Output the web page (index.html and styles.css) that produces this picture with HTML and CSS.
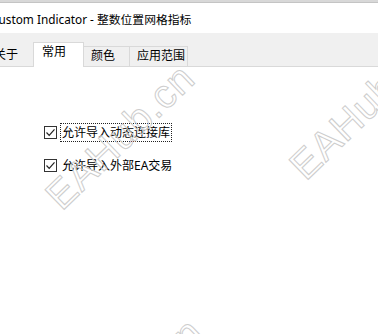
FILE: index.html
```html
<!DOCTYPE html>
<html lang="zh-CN">
<head>
  <meta charset="UTF-8">
  <title>Custom Indicator - 整数位置网格指标</title>
  <link rel="stylesheet" href="styles.css">
</head>
<body>
  <div class="window">
    <div class="topstrip"></div>
    <div class="titlebar">
      <span class="title">Custom Indicator - 整数位置网格指标</span>
    </div>

    <div class="tabbar">
      <div class="tab tab-first">关于</div>
      <div class="tab tab-active">常用</div>
      <div class="tab tab-color">颜色</div>
      <div class="tab tab-scope">应用范围</div>
    </div>

    <div class="content">
      <label class="check">
        <span class="box"><svg width="11" height="11" viewBox="0 0 11 11"><path d="M1.5 5.5 L4.2 8.3 L9.5 2.3" fill="none" stroke="#222" stroke-width="1.2"/></svg></span>
        <span class="label focused">允许导入动态连接库</span>
      </label>
      <label class="check">
        <span class="box"><svg width="11" height="11" viewBox="0 0 11 11"><path d="M1.5 5.5 L4.2 8.3 L9.5 2.3" fill="none" stroke="#222" stroke-width="1.2"/></svg></span>
        <span class="label">允许导入外部EA交易</span>
      </label>
    </div>

    <div class="watermark wm-1">EAHub.cn</div>
    <div class="watermark wm-2">EAHub.cn</div>
    <div class="watermark wm-3">EAHub.cn</div>
  </div>
</body>
</html>
```

FILE: styles.css
```css
html, body { margin: 0; padding: 0; }
body { background: #fff; font-family: "Noto Sans", "Noto Sans CJK SC", sans-serif; color: #000; }
.window { position: relative; width: 378px; height: 334px; overflow: hidden; background: #fff; }

.topstrip { height: 2px; background: #d8d8d8; border-bottom: 1px solid #c4c4c4; }
.titlebar { height: 30px; display: flex; align-items: center; overflow: hidden; }
.title { margin-left: -9px; font-size: 11.8px; white-space: nowrap; color: #000; }

.tabbar { height: 33px; background: #f0f0f0; border-bottom: 1px solid #d9d9d9; display: flex; align-items: flex-end; font-size: 12px; }
.tab { box-sizing: border-box; height: 20px; padding-left: 7px; line-height: 18px; border-right: 1px solid #d9d9d9; border-top: 1px solid #d9d9d9; white-space: nowrap; color: #000; }
.tab-first { width: 35px; margin-left: -1px; padding-left: 0; text-indent: -5px; border-top: none; }
.tab-active { width: 51px; height: 25px; padding-left: 8px; line-height: 18px; background: #fff; border: 1px solid #d9d9d9; border-bottom: none; margin-bottom: -1px; margin-left: -1px; }
.tab-color { width: 46px; }
.tab-scope { width: 58px; }

.content { display: flex; flex-direction: column; gap: 14px; padding: 56px 0 0 44px; }
.check { display: flex; align-items: center; gap: 3px; font-size: 12px; height: 19px; }
.box { box-sizing: border-box; width: 13px; height: 13px; border: 1px solid #333; background: #fff; display: flex; align-items: center; justify-content: center; }
.label { padding: 0 1px; line-height: 17px; border: 1px dotted transparent; }
.label.focused { border-color: #222; }

.watermark { position: absolute; font-family: "Liberation Sans", sans-serif; font-size: 40px; line-height: 40px; color: transparent; -webkit-text-stroke: 1px #cdcdcd; transform-origin: 0 100%; transform: rotate(-44deg); white-space: nowrap; letter-spacing: 1px; }
.wm-1 { left: 66px; top: 176px; }
.wm-2 { left: 310px; top: 146px; }
.wm-3 { left: 74px; top: 430px; }
```
